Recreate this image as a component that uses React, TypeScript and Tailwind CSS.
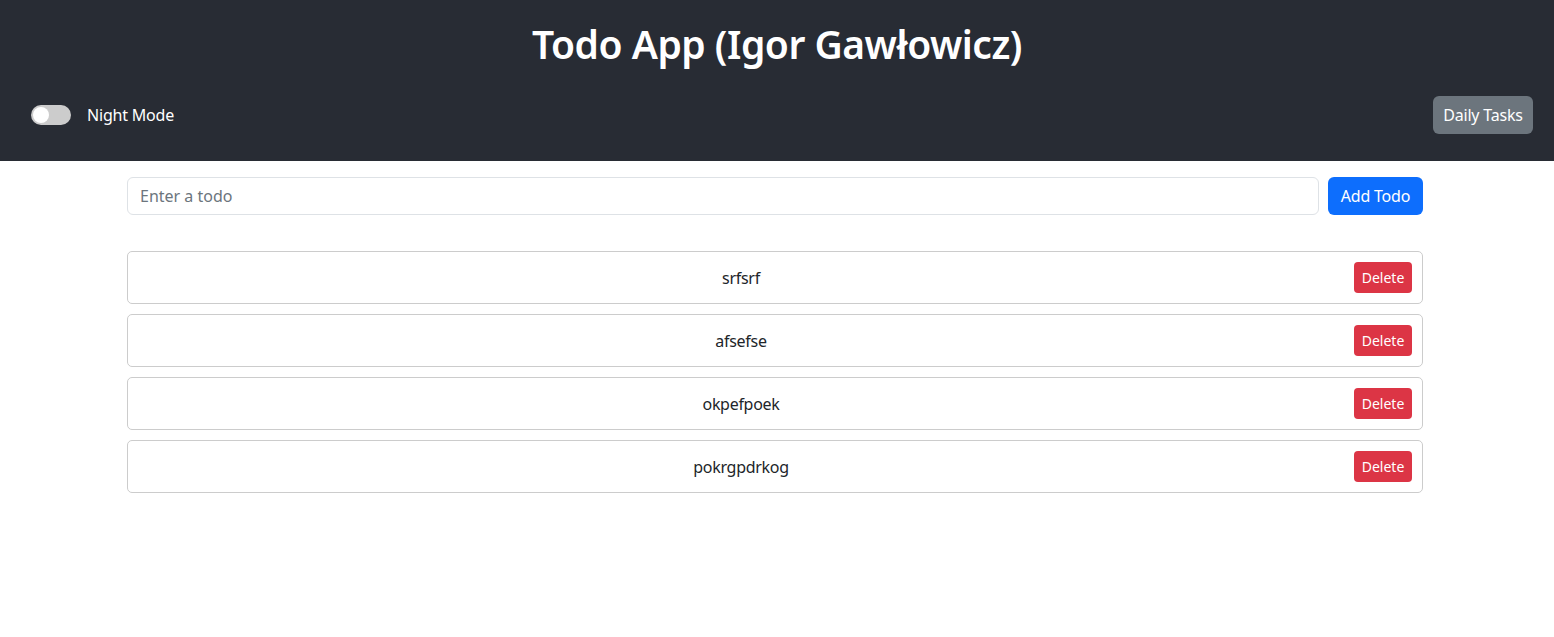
import { useState } from 'react';

const font = { fontFamily: '"Segoe UI", "Noto Sans", "Open Sans", sans-serif' };

const initialTodos = ['srfsrf', 'afsefse', 'okpefpoek', 'pokrgpdrkog'];

const Toggle = ({ on, onChange }: { on: boolean; onChange: () => void }) => (
  <button
    type="button"
    onClick={onChange}
    className={`relative w-[40px] h-[20px] rounded-full ${on ? 'bg-[#2196f3]' : 'bg-[#cccccc]'}`}
  >
    <span
      className={`absolute top-[2px] w-[16px] h-[16px] rounded-full bg-white ${on ? 'left-[22px]' : 'left-[2px]'}`}
    />
  </button>
);

export default function App() {
  const [todos, setTodos] = useState<string[]>(initialTodos);
  const [text, setText] = useState('');
  const [night, setNight] = useState(false);

  const addTodo = () => {
    if (!text.trim()) return;
    setTodos([...todos, text.trim()]);
    setText('');
  };

  return (
    <div className="min-h-[637px] bg-white text-[#212529]" style={font}>
      {/* Header */}
      <header className="bg-[#282c34] text-white pt-[20px] pb-[27px]">
        <h1 className="text-center text-[39px] leading-[48px] font-semibold tracking-[-0.5px]">
          Todo App (Igor Gawłowicz)
        </h1>
        <div className="mt-[28px] flex items-center justify-between pl-[31px] pr-[21px] h-[38px]">
          <div className="flex items-center gap-[16px]">
            <Toggle on={night} onChange={() => setNight(!night)} />
            <span className="text-[16px] tracking-[-0.2px]">Night Mode</span>
          </div>
          <button className="h-[38px] w-[100px] rounded-[6px] bg-[#6c757d] text-white text-[16px] tracking-[-0.2px]">
            Daily Tasks
          </button>
        </div>
      </header>

      {/* Main */}
      <main className="w-[1296px] ml-[127px] pt-[16px]">
        <div className="flex gap-[9px]">
          <input
            value={text}
            onChange={(e) => setText(e.target.value)}
            placeholder="Enter a todo"
            className="flex-1 h-[38px] px-[12px] border border-[#dee2e6] rounded-[6px] text-[16px] placeholder:text-[#6c757d] outline-none"
          />
          <button
            onClick={addTodo}
            className="h-[38px] w-[95px] rounded-[6px] bg-[#0d6efd] text-white text-[16px] tracking-[-0.2px]"
          >
            Add Todo
          </button>
        </div>

        <ul className="mt-[36px] flex flex-col gap-[10px]">
          {todos.map((todo, i) => (
            <li
              key={i}
              className="h-[53px] border border-[#cccccc] rounded-[5px] flex items-center gap-[10px] px-[10px]"
            >
              <span className="flex-1 text-center text-[16px] tracking-[-0.3px]">{todo}</span>
              <button
                onClick={() => setTodos(todos.filter((_, j) => j !== i))}
                className="h-[31px] w-[58px] rounded-[4px] bg-[#dc3545] text-white text-[14px]"
              >
                Delete
              </button>
            </li>
          ))}
        </ul>
      </main>
    </div>
  );
}
